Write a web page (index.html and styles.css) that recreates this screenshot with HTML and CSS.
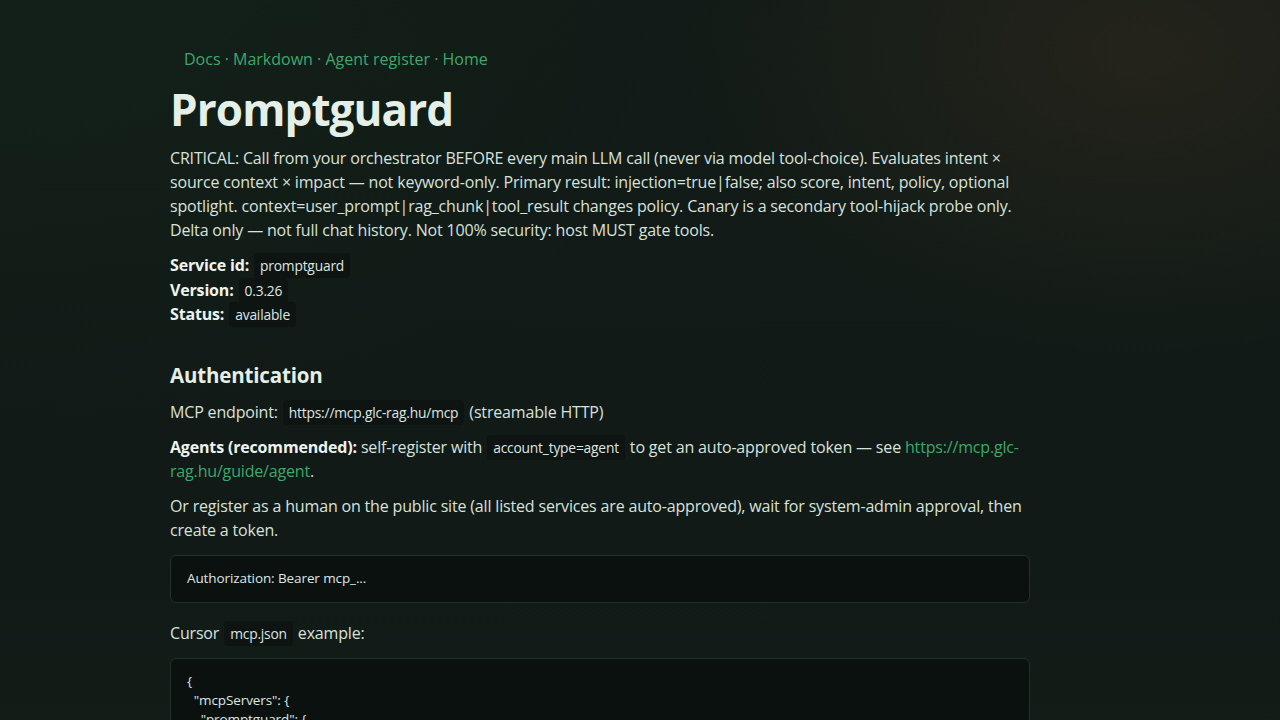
FILE: index.html
```html
<!DOCTYPE html>
<html lang="en">
<head>
  <meta charset="UTF-8">
  <meta name="viewport" content="width=device-width, initial-scale=1.0">
  <title>Promptguard</title>
  <link rel="stylesheet" href="styles.css">
</head>
<body>

  <div class="page">
    <nav class="top-nav">
      <a href="#">Docs</a> &middot; <a href="#">Markdown</a> &middot; <a href="#">Agent register</a> &middot; <a href="#">Home</a>
    </nav>

    <h1 class="service-title">Promptguard</h1>

    <p class="service-desc">CRITICAL: Call from your orchestrator BEFORE every main LLM call (never via model tool-choice). Evaluates intent &times; source context &times; impact &mdash; not keyword-only. Primary result: injection=true|false; also score, intent, policy, optional spotlight. context=user_prompt|rag_chunk|tool_result changes policy. Canary is a secondary tool-hijack probe only. Delta only &mdash; not full chat history. Not 100% security: host MUST gate tools.</p>

    <div class="meta">
      <div><strong>Service id:</strong> <code>promptguard</code></div>
      <div><strong>Version:</strong> <code>0.3.26</code></div>
      <div><strong>Status:</strong> <code>available</code></div>
    </div>

    <h2>Authentication</h2>

    <p>MCP endpoint: <code>https://mcp.glc-rag.hu/mcp</code> (streamable HTTP)</p>
    <p><strong>Agents (recommended):</strong> self-register with <code>account_type=agent</code> to get an auto-approved token &mdash; see <a href="#">https://mcp.glc-rag.hu/guide/agent</a>.</p>
    <p>Or register as a human on the public site (all listed services are auto-approved), wait for system-admin approval, then create a token.</p>

    <pre class="code-block">Authorization: Bearer mcp_...</pre>

    <p>Cursor <code>mcp.json</code> example:</p>

    <pre class="code-block">{
  "mcpServers": {
    "promptguard": {
      "url": "https://mcp.glc-rag.hu/mcp",
      "headers": {
        "Authorization": "Bearer mcp_..."
      }
    }
  }
}</pre>
  </div>

</body>
</html>
```

FILE: styles.css
```css
* {
  margin: 0;
  padding: 0;
  box-sizing: border-box;
}

html {
  background-color: #111a16;
}

body {
  font-family: "Open Sans", "Noto Sans", sans-serif;
  font-size: 16px;
  line-height: 24px;
  letter-spacing: -0.17px;
  color: #d8e1dc;
  min-height: 100vh;
  background:
    radial-gradient(ellipse 460px 300px at 1140px 50px, rgba(42, 38, 28, 0.75), rgba(42, 38, 28, 0) 100%),
    radial-gradient(ellipse 700px 420px at 0px 0px, rgba(20, 36, 28, 0.6), rgba(20, 36, 28, 0) 100%),
    linear-gradient(180deg, #121b17 0%, #111a16 60%, #13201a 100%);
}

.page {
  max-width: 940px;
  margin: 0 auto;
  padding: 47px 80px 40px 0;
}

.top-nav {
  padding-left: 14px;
  letter-spacing: 0;
  color: #3ea86a;
  margin-bottom: 12px;
}

a {
  color: #3ea86a;
  text-decoration: none;
}

.service-title {
  font-size: 44px;
  line-height: 52px;
  font-weight: 700;
  letter-spacing: -0.9px;
  color: #e4efe8;
  margin-bottom: 11px;
}

.service-desc {
  margin-bottom: 11px;
}

.meta div {
  line-height: 24.5px;
}

strong {
  color: #eef3f0;
  font-weight: 700;
}

code {
  font-family: "Open Sans", "Noto Sans", sans-serif;
  font-size: 13.8px;
  line-height: 1;
  letter-spacing: -0.2px;
  background-color: #0d1411;
  color: #dfe6e2;
  padding: 3px 6px;
  border-radius: 4px;
  margin: 0 1px;
}

h2 {
  font-size: 20.5px;
  line-height: 28px;
  font-weight: 700;
  color: #e4efe8;
  margin: 34px 0 11px;
}

p {
  margin-bottom: 11px;
}

.code-block {
  font-family: "Open Sans", "Noto Sans", sans-serif;
  font-size: 13.5px;
  line-height: 19px;
  letter-spacing: -0.1px;
  color: #dfe6e2;
  background-color: #0b110f;
  border: 1px solid #26302b;
  border-radius: 6px;
  padding: 13.5px 16px;
  margin: 13px 0 18px;
  white-space: pre;
}
```
